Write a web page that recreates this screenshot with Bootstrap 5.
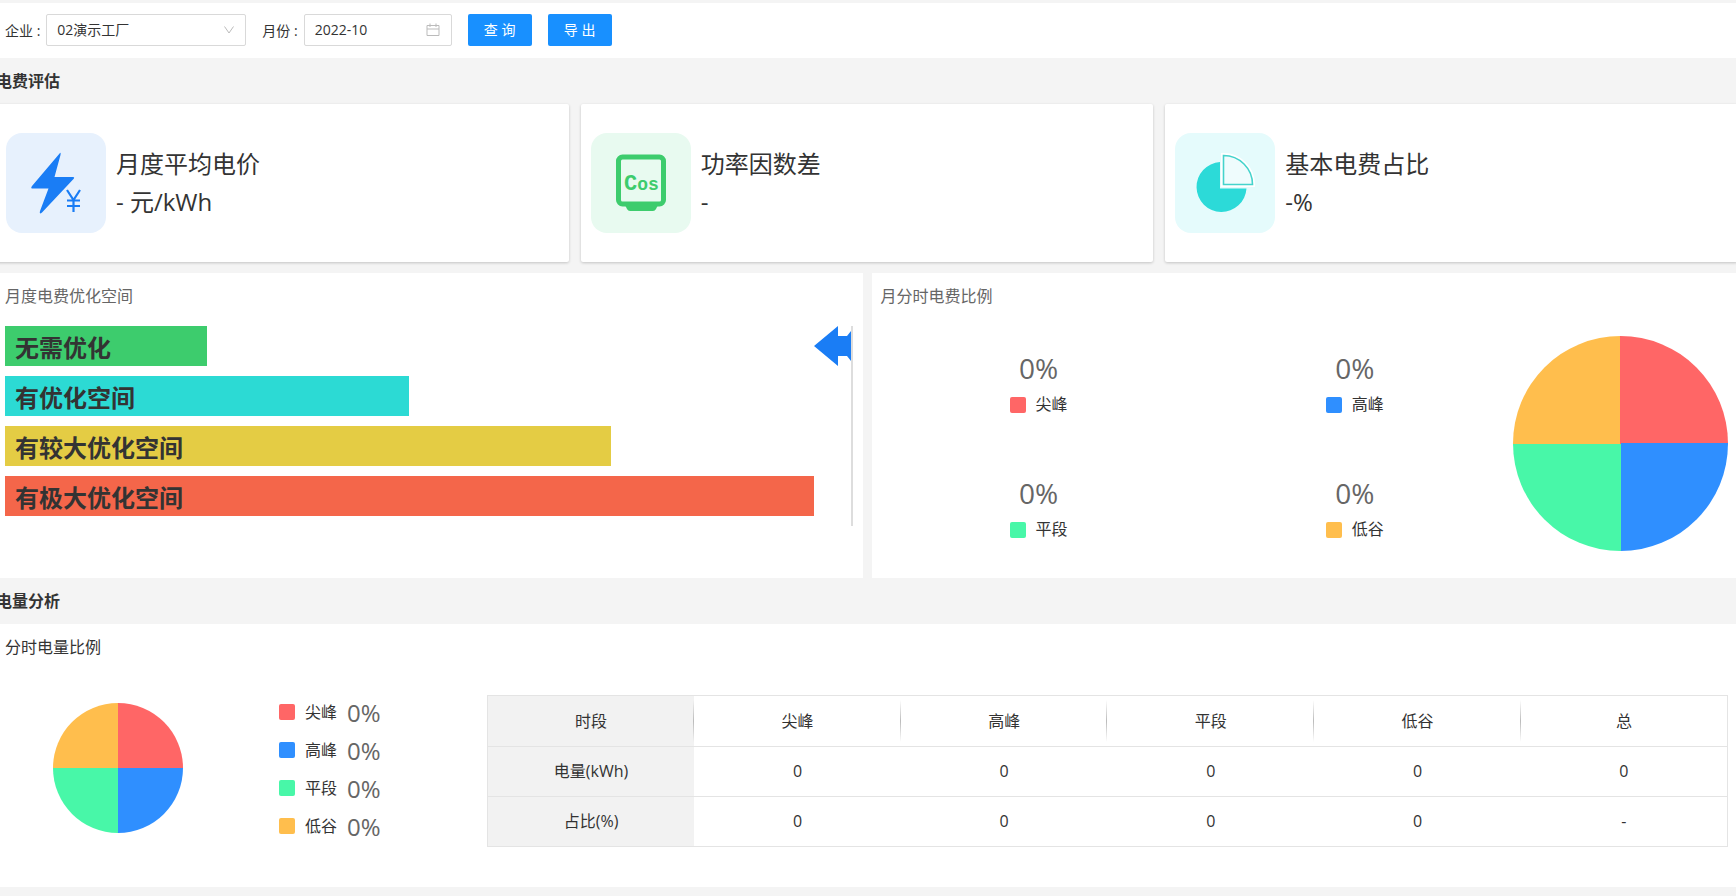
<!DOCTYPE html>
<html lang="zh-CN">
<head>
<meta charset="utf-8">
<meta name="viewport" content="width=device-width, initial-scale=1">
<title>电费评估</title>
<link rel="stylesheet" href="https://cdn.jsdelivr.net/npm/bootstrap@5.3.0/dist/css/bootstrap.min.css">
<style>
:root{--peak:#ff6666;--high:#2f8fff;--flat:#48f7a8;--low:#ffbe4d}
body{background:#f4f4f4;color:#333;font:16px/25px "Open Sans","Noto Sans CJK SC",sans-serif;overflow-x:hidden}
.toolbar{background:#fff;border-top:3px solid #f4f4f4;padding:11px 5px 12px;font-size:14px;column-gap:16px;row-gap:8px}
.toolbar label{margin-right:6px}
.toolbar .form-select,.toolbar .form-control{height:32px;padding:0 10px 1px;font-size:14px;color:#333;border:1px solid #d9d9d9;border-radius:2px;background-color:#fff}
.toolbar .form-select{width:200px;background-image:url("data:image/svg+xml,%3Csvg xmlns='http://www.w3.org/2000/svg' viewBox='0 0 12 12'%3E%3Cpath d='M1.500 2.500 6 9 10.500 2.500' fill='none' stroke='%23bbb'/%3E%3C/svg%3E");background-size:12px 12px;background-position:right 10px center}
.month-box{width:148px}
.month-box svg{position:absolute;right:12px;top:9px;pointer-events:none}
.toolbar .btn{width:64px;height:32px;padding:0 0 1px;font-size:14px;border:0;border-radius:2px;background:#1890ff;color:#fff}
.content-wrap{margin:0 -2px 0 -4px}
.section-title{height:46px;line-height:46px;font-size:16px;font-weight:700;margin:0}
.kpi-row{display:grid;grid-template-columns:repeat(3,1fr);gap:12px;margin-bottom:11px}
.kpi{background:#fff;height:158px;padding:0 10px;gap:10px;border-radius:2px;box-shadow:0 1px 3px rgba(0,0,0,.2);font-size:24px;line-height:38px}
.tile{width:100px;height:100px;border-radius:16px;flex:none}
.tile-blue{background:#e7f1fd}.tile-green{background:#e8faf0}.tile-cyan{background:#e5fbfc}
.cos{font-family:"Liberation Mono",monospace;font-weight:700}
.panel-row{display:grid;grid-template-columns:1fr 1fr;gap:9px}
.panel{background:#fff;padding:11px 10px 10px 9px}
.panel h3{font-size:16px;line-height:25px;font-weight:400;color:#666;margin:0}
.levels{margin-top:17px;border-right:2px solid #ddd;height:200px}
.level{height:40px;line-height:44px;margin-bottom:10px;padding-left:10px;font-size:24px;font-weight:700;white-space:nowrap}
.lv1{background:#3dcc6d}.lv2{background:#2cdad4}.lv3{background:#e4cc44}.lv4{background:#f4664a}
.share{margin-top:9px;height:250px}
.share-grid{display:grid;grid-template:1fr 1fr/1fr 1fr;height:100%}
.share-num{font-size:28px;line-height:48px;color:#666}
.key-row{gap:10px}
.swatch{width:16px;height:16px;border-radius:2px;flex:none}
.c-peak{background:var(--peak)}.c-high{background:var(--high)}.c-flat{background:var(--flat)}.c-low{background:var(--low)}
.pie{border-radius:50%;flex:none;background:conic-gradient(var(--peak) 25%,var(--high) 0 50%,var(--flat) 0 75%,var(--low) 0)}
.pie-lg{width:215px;height:215px}
.pie-sm{width:130px;height:130px;margin:10px 96px 0 48px}
.panel.energy{padding-bottom:40px}
.panel.energy h3{color:#333}
.energy-body{margin-top:33px}
.legend-list{width:208px;flex:none}
.legend-list li{height:38px}
.legend-list b{font-size:24px;font-weight:400;color:#666}
.table-box{padding-top:2px}
.data-table{table-layout:fixed;border:1px solid #e4e4e4;text-align:center;margin:0;color:#333}
.data-table th,.data-table td{height:50px;padding:0;vertical-align:middle;font-weight:400;border-bottom:1px solid #e4e4e4}
.data-table thead th{height:51px}
.data-table tr>:first-child{background-color:#f2f2f2}
.data-table thead th:not(:last-child){background-image:linear-gradient(transparent,#bbb 50%,transparent);background-size:1px 42px;background-position:right center;background-repeat:no-repeat}
</style>
</head>
<body>
<form class="toolbar d-flex flex-wrap align-items-center">
  <div class="d-flex align-items-center">
    <label for="company">企业 :</label>
    <select id="company" class="form-select"><option>02演示工厂</option></select>
  </div>
  <div class="d-flex align-items-center">
    <label for="month">月份 :</label>
    <div class="month-box position-relative">
      <input id="month" type="text" class="form-control" value="2022-10">
      <svg width="14" height="14" viewBox="0 0 14 14" fill="none" stroke="#bbb"><path d="M1 2.500H13V12.500H1ZM1 6H13M4 .5V4M10 .5V4"/></svg>
    </div>
  </div>
  <button type="button" class="btn">查 询</button>
  <button type="button" class="btn">导 出</button>
</form>

<main class="content-wrap">
  <h2 class="section-title">电费评估</h2>
  <div class="kpi-row">
    <div class="kpi d-flex align-items-center">
      <svg class="tile tile-blue" viewBox="0 0 100 100" fill="#1a7df5"><path d="M54 20Q55 19 54.500 22L48.500 44H67Q69 44 67.500 46L36 79.500Q33 82 34 78L42.500 55.500H26Q24.500 55 26 53Z"/><path d="M61 57 67.500 67 74 57M67.500 67V79M61 67.500H74M61 73H74" fill="none" stroke="#1a7df5" stroke-width="2.200"/></svg>
      <div>月度平均电价<br>- 元/kWh</div>
    </div>
    <div class="kpi d-flex align-items-center">
      <svg class="tile tile-green" viewBox="0 0 100 100" fill="#3dcc6d"><rect x="27.500" y="24" width="45" height="47" rx="4" fill="none" stroke="#3dcc6d" stroke-width="5"/><path d="M34 72H67L65 76Q64 78 62 78H39Q37 78 36 76Z"/><text class="cos" x="33" y="57" font-size="22">C<tspan font-size="18">os</tspan></text></svg>
      <div>功率因数差<br>-</div>
    </div>
    <div class="kpi d-flex align-items-center">
      <svg class="tile tile-cyan" viewBox="0 0 100 100"><path d="M45 29A25 25 0 1 0 71.500 55.500H45Z" fill="#2cdad8"/><path d="M48.500 22.500V51.500H77.500A29 29 0 0 0 48.500 22.500Z" fill="#effcfd" stroke="#fff" stroke-width="5"/><path d="M48.500 22.500V51.500H77.500A29 29 0 0 0 48.500 22.500Z" fill="#effcfd" stroke="#45d3cc" stroke-width="1.600"/></svg>
      <div>基本电费占比<br>-%</div>
    </div>
  </div>

  <div class="panel-row">
    <section class="panel">
      <h3>月度电费优化空间</h3>
      <div class="levels d-flex">
        <div class="flex-grow-1">
          <div class="level lv1" style="width:25%">无需优化</div>
          <div class="level lv2" style="width:50%">有优化空间</div>
          <div class="level lv3" style="width:75%">有较大优化空间</div>
          <div class="level lv4" style="width:100%">有极大优化空间</div>
        </div>
        <svg class="flex-shrink-0" width="37" height="40" viewBox="0 0 37 40"><path d="M0 20 24 0V10H33L37 5V35L33 30H24V40Z" fill="#1a7df5"/></svg>
      </div>
    </section>
    <section class="panel">
      <h3>月分时电费比例</h3>
      <div class="share d-flex align-items-center">
        <div class="share-grid flex-grow-1 text-center">
          <div class="align-self-center"><div class="share-num">0%</div><div class="key-row d-flex justify-content-center align-items-center"><i class="swatch c-peak"></i><span>尖峰</span></div></div>
          <div class="align-self-center"><div class="share-num">0%</div><div class="key-row d-flex justify-content-center align-items-center"><i class="swatch c-high"></i><span>高峰</span></div></div>
          <div class="align-self-center"><div class="share-num">0%</div><div class="key-row d-flex justify-content-center align-items-center"><i class="swatch c-flat"></i><span>平段</span></div></div>
          <div class="align-self-center"><div class="share-num">0%</div><div class="key-row d-flex justify-content-center align-items-center"><i class="swatch c-low"></i><span>低谷</span></div></div>
        </div>
        <div class="pie pie-lg"></div>
      </div>
    </section>
  </div>

  <h2 class="section-title">电量分析</h2>
  <section class="panel energy">
    <h3>分时电量比例</h3>
    <div class="energy-body d-flex align-items-start">
      <div class="pie pie-sm"></div>
      <ul class="legend-list list-unstyled m-0">
        <li class="key-row d-flex align-items-center"><i class="swatch c-peak"></i><span>尖峰</span><b>0%</b></li>
        <li class="key-row d-flex align-items-center"><i class="swatch c-high"></i><span>高峰</span><b>0%</b></li>
        <li class="key-row d-flex align-items-center"><i class="swatch c-flat"></i><span>平段</span><b>0%</b></li>
        <li class="key-row d-flex align-items-center"><i class="swatch c-low"></i><span>低谷</span><b>0%</b></li>
      </ul>
      <div class="table-box flex-grow-1">
        <table class="data-table w-100">
          <thead><tr><th scope="col">时段</th><th scope="col">尖峰</th><th scope="col">高峰</th><th scope="col">平段</th><th scope="col">低谷</th><th scope="col">总</th></tr></thead>
          <tbody>
            <tr><th scope="row">电量(kWh)</th><td>0</td><td>0</td><td>0</td><td>0</td><td>0</td></tr>
            <tr><th scope="row">占比(%)</th><td>0</td><td>0</td><td>0</td><td>0</td><td>-</td></tr>
          </tbody>
        </table>
      </div>
    </div>
  </section>
</main>
<script src="https://cdn.jsdelivr.net/npm/bootstrap@5.3.0/dist/js/bootstrap.bundle.min.js"></script>
</body>
</html>
